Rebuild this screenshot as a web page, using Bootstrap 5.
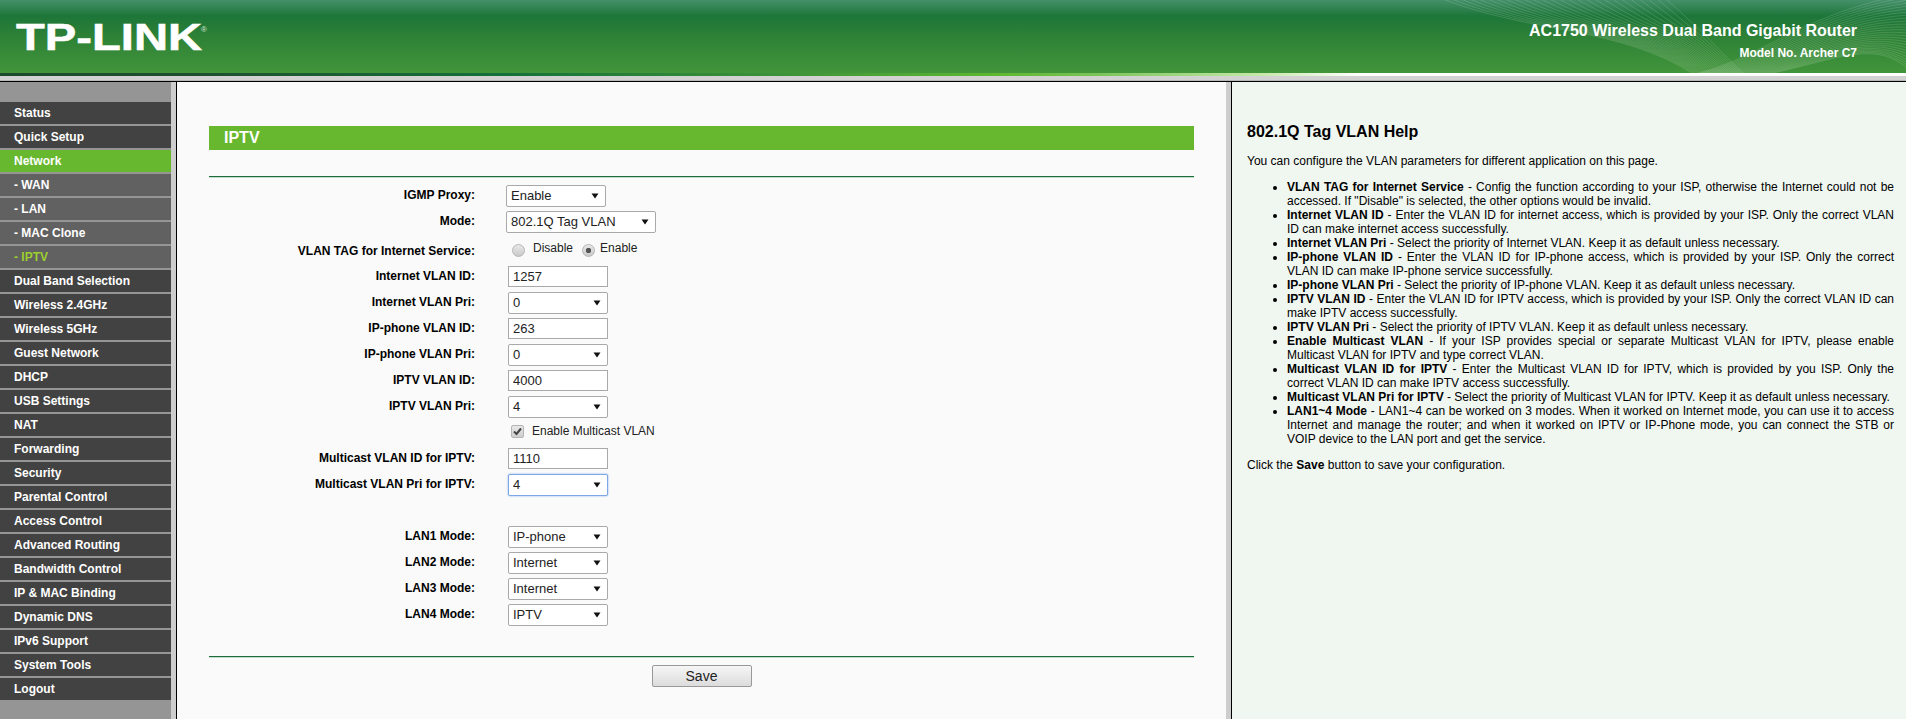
<!DOCTYPE html>
<html lang="en">
<head>
<meta charset="utf-8">
<title>IPTV</title>
<link href="https://cdn.jsdelivr.net/npm/bootstrap@5.3.0/dist/css/bootstrap.min.css" rel="stylesheet">
<style>
html,body{height:719px;overflow:hidden;background:#fafafa;}
body{font-family:"Liberation Sans",Arial,sans-serif;font-size:12px;color:#000;}
.hdr{height:73px;background:linear-gradient(180deg,#45906a 0,#1d7639 16px,#2d8136 36px,#42953a 73px);position:relative;overflow:hidden;}
.hdr svg.waves{position:absolute;inset:0;}
.logo-txt{position:absolute;left:16px;top:19px;font-weight:700;font-size:37px;line-height:38px;color:#fff;transform:scaleX(1.275);transform-origin:left center;-webkit-text-stroke:.5px #fff;}
.logo-reg{position:absolute;left:201px;top:25px;font-size:8px;line-height:10px;color:#d8e8d8;}
.hdr-r{position:absolute;right:49px;top:20px;text-align:right;color:#fff;font-weight:700;}
.hdr-t{font-size:16px;line-height:22px;}
.hdr-m{font-size:12px;line-height:16px;margin-top:3px;}
.hdr-band{height:3px;background:linear-gradient(90deg,#1d4a2c 0,#1f4f2f 200px,#14703a 500px,#3f9538 800px,#5fb830 1000px,#7cc45a 1100px,#c5e8a8 1260px,#fff 1360px,#fff 100%);}
.hdr-gray{height:5px;background:linear-gradient(180deg,#d2d2d2 0,#d2d2d2 70%,#aaa 100%);}
.shell{height:638px;border-top:1px solid #000;}
.side{width:177px;flex:none;background:#959595;border-right:1px solid #000;box-shadow:inset -5px 0 0 #cdcdcd;padding:20px 5px 0 0;}
.side-list{gap:2px;}
.side-i{display:block;height:22px;line-height:22px;padding-left:14px;background:#424242;color:#fff;font-weight:700;font-size:12px;text-decoration:none;}
.side-i.sub{background:#616161;}
.side-i.act{background:#67b82f;}
.side-i.cur{color:#9ccf2e;}
.mainp{width:1055px;flex:none;background:#fafafa;border-right:1px solid #000;box-shadow:inset -5px 0 0 #cdcdcd;padding:44px 37px 0 32px;}
.ttl{height:24px;line-height:23px;background:#67b82f;color:#fff;font-weight:700;font-size:16px;padding-left:15px;}
.rule{height:2px;border-top:1px solid #1c6b3c;background:#fff;box-shadow:inset 0 1px 0 #c3dcc8;}
.rule-a{margin-top:26px;}
.rule-b{margin-top:26px;}
.frm{padding-top:7px;}
.frow{height:26px;}
.frow.tall{height:29px;}
.frow.gap{height:52px;}
.lab{width:266px;flex:none;text-align:right;font-weight:700;line-height:21px;}
.ctl{padding-left:33px;}
.ctl.nar{padding-left:31px;}
select.pick{appearance:none;-webkit-appearance:none;--bs-form-select-bg-img:none;background-image:url("data:image/svg+xml,%3Csvg xmlns='http://www.w3.org/2000/svg' width='8' height='6'%3E%3Cpath d='M0.5 0.5H7.5L4 5.5Z' fill='%23111'/%3E%3C/svg%3E");background-repeat:no-repeat;background-position:right 6px center;background-size:8px 6px;width:100px;height:22px;padding:0 16px 0 4px;font-size:13px;line-height:20px;border:1px solid #a9a9a9;border-radius:2px;background-color:#fff;color:#222;box-shadow:none;font-family:"Liberation Sans",Arial,sans-serif;}
select.pick.w1{width:150px;}
select.pick.foc{border-color:#7da7e6;box-shadow:0 0 2px #7da7e6;}
input.txt{width:100px;height:21px;padding:0 4px;font-size:13px;line-height:19px;border:1px solid #a9a9a9;border-radius:0;background:#fff;color:#222;font-family:"Liberation Sans",Arial,sans-serif;}
.rad{appearance:none;width:13px;height:13px;border-radius:50%;border:1px solid #b5b5b5;background:linear-gradient(180deg,#e8e8e8,#c9c9c9);display:block;flex:none;margin:0;}
.rad:checked{background:radial-gradient(circle,#555 0,#555 2.4px,transparent 3px),linear-gradient(180deg,#e8e8e8,#c9c9c9);}
.rad-row{height:24px;padding-left:37px;padding-top:4px;}
.rad-row .rad{margin-top:3px;}
.rad-row .optl-a{margin:0 9px 0 8px;}
.rad-row .optl-b{margin-left:5px;}
.chk-row{padding-left:36px;padding-top:2px;}
.chk{appearance:none;width:13px;height:13px;border-radius:2px;border:1px solid #b5b5b5;background:linear-gradient(180deg,#e8e8e8,#cfcfcf);display:block;flex:none;margin:0;}
.optl{font-size:12px;line-height:14px;color:#222;}
.chkm{position:absolute;left:1px;top:1px;}
.foot{padding-top:7px;}
.savebtn{width:100px;height:22px;padding:0;font-size:14px;line-height:20px;color:#222;background:linear-gradient(180deg,#f6f6f6,#dcdcdc);border:1px solid #999;border-radius:2px;--bs-btn-hover-bg:#eee;}
.helpp{flex:1 1 auto;background:#f0f6f0;padding:41px 12px 0 15px;}
.helpp h1{font-size:16px;font-weight:700;line-height:18px;margin:0 0 13px;}
.helpp p{font-size:12px;line-height:14px;margin:0;}
.helpp ul{margin:12px 0 12px;padding-left:40px;}
.helpp li{font-size:12px;line-height:14px;text-align:justify;}
</style>
</head>
<body>
<header>
  <div class="hdr">
    <svg class="waves" width="1906" height="73" id="wv"></svg>
    <div class="logo-txt">TP-LINK</div>
    <div class="logo-reg">®</div>
    <div class="hdr-r">
      <div class="hdr-t">AC1750 Wireless Dual Band Gigabit Router</div>
      <div class="hdr-m">Model No. Archer C7</div>
    </div>
  </div>
  <div class="hdr-band"></div>
  <div class="hdr-gray"></div>
</header>
<div class="shell d-flex">
  <nav class="side">
    <div class="side-list d-flex flex-column">
      <a class="side-i" href="#">Status</a>
      <a class="side-i" href="#">Quick Setup</a>
      <a class="side-i act" href="#">Network</a>
      <a class="side-i sub" href="#">- WAN</a>
      <a class="side-i sub" href="#">- LAN</a>
      <a class="side-i sub" href="#">- MAC Clone</a>
      <a class="side-i sub cur" href="#">- IPTV</a>
      <a class="side-i" href="#">Dual Band Selection</a>
      <a class="side-i" href="#">Wireless 2.4GHz</a>
      <a class="side-i" href="#">Wireless 5GHz</a>
      <a class="side-i" href="#">Guest Network</a>
      <a class="side-i" href="#">DHCP</a>
      <a class="side-i" href="#">USB Settings</a>
      <a class="side-i" href="#">NAT</a>
      <a class="side-i" href="#">Forwarding</a>
      <a class="side-i" href="#">Security</a>
      <a class="side-i" href="#">Parental Control</a>
      <a class="side-i" href="#">Access Control</a>
      <a class="side-i" href="#">Advanced Routing</a>
      <a class="side-i" href="#">Bandwidth Control</a>
      <a class="side-i" href="#">IP &amp; MAC Binding</a>
      <a class="side-i" href="#">Dynamic DNS</a>
      <a class="side-i" href="#">IPv6 Support</a>
      <a class="side-i" href="#">System Tools</a>
      <a class="side-i" href="#">Logout</a>
    </div>
  </nav>
  <main class="mainp">
    <div class="ttl">IPTV</div>
    <div class="rule rule-a"></div>
    <form class="frm">
      <div class="frow d-flex"><div class="lab">IGMP Proxy:</div><div class="ctl nar"><select class="form-select pick"><option>Enable</option></select></div></div>
      <div class="frow d-flex"><div class="lab">Mode:</div><div class="ctl nar"><select class="form-select pick w1"><option>802.1Q Tag VLAN</option></select></div></div>
      <div class="frow tall d-flex"><div class="lab pt-1">VLAN TAG for Internet Service:</div>
        <div class="rad-row d-flex align-items-start">
          <input class="rad" type="radio" name="vt">
          <span class="optl optl-a">Disable</span>
          <input class="rad" type="radio" name="vt" checked>
          <span class="optl optl-b">Enable</span>
        </div>
      </div>
      <div class="frow d-flex"><div class="lab">Internet VLAN ID:</div><div class="ctl"><input class="form-control txt" value="1257"></div></div>
      <div class="frow d-flex"><div class="lab">Internet VLAN Pri:</div><div class="ctl"><select class="form-select pick"><option>0</option></select></div></div>
      <div class="frow d-flex"><div class="lab">IP-phone VLAN ID:</div><div class="ctl"><input class="form-control txt" value="263"></div></div>
      <div class="frow d-flex"><div class="lab">IP-phone VLAN Pri:</div><div class="ctl"><select class="form-select pick"><option>0</option></select></div></div>
      <div class="frow d-flex"><div class="lab">IPTV VLAN ID:</div><div class="ctl"><input class="form-control txt" value="4000"></div></div>
      <div class="frow d-flex"><div class="lab">IPTV VLAN Pri:</div><div class="ctl"><select class="form-select pick"><option>4</option></select></div></div>
      <div class="frow d-flex"><div class="lab"></div><div class="chk-row d-flex align-items-center gap-2 align-self-start">
        <span class="position-relative d-block"><input class="chk" type="checkbox" checked><svg class="chkm" width="11" height="11" viewBox="0 0 11 11"><path d="M2 5.5 L4.5 8 L9 2.5" fill="none" stroke="#444" stroke-width="2"/></svg></span>
        <span class="optl">Enable Multicast VLAN</span></div></div>
      <div class="frow d-flex"><div class="lab">Multicast VLAN ID for IPTV:</div><div class="ctl"><input class="form-control txt" value="1110"></div></div>
      <div class="frow gap d-flex"><div class="lab">Multicast VLAN Pri for IPTV:</div><div class="ctl"><select class="form-select pick foc"><option>4</option></select></div></div>
      <div class="frow d-flex"><div class="lab">LAN1 Mode:</div><div class="ctl"><select class="form-select pick"><option>IP-phone</option></select></div></div>
      <div class="frow d-flex"><div class="lab">LAN2 Mode:</div><div class="ctl"><select class="form-select pick"><option>Internet</option></select></div></div>
      <div class="frow d-flex"><div class="lab">LAN3 Mode:</div><div class="ctl"><select class="form-select pick"><option>Internet</option></select></div></div>
      <div class="frow d-flex"><div class="lab">LAN4 Mode:</div><div class="ctl"><select class="form-select pick"><option>IPTV</option></select></div></div>
    </form>
    <div class="rule rule-b"></div>
    <div class="foot text-center"><button type="button" class="btn savebtn">Save</button></div>
  </main>
  <aside class="helpp">
    <h1>802.1Q Tag VLAN Help</h1>
    <p>You can configure the VLAN parameters for different application on this page.</p>
    <ul>
      <li><b>VLAN TAG for Internet Service</b> - Config the function according to your ISP, otherwise the Internet could not be accessed. If "Disable" is selected, the other options would be invalid.</li>
      <li><b>Internet VLAN ID</b> - Enter the VLAN ID for internet access, which is provided by your ISP. Only the correct VLAN ID can make internet access successfully.</li>
      <li><b>Internet VLAN Pri</b> - Select the priority of Internet VLAN. Keep it as default unless necessary.</li>
      <li><b>IP-phone VLAN ID</b> - Enter the VLAN ID for IP-phone access, which is provided by your ISP. Only the correct VLAN ID can make IP-phone service successfully.</li>
      <li><b>IP-phone VLAN Pri</b> - Select the priority of IP-phone VLAN. Keep it as default unless necessary.</li>
      <li><b>IPTV VLAN ID</b> - Enter the VLAN ID for IPTV access, which is provided by your ISP. Only the correct VLAN ID can make IPTV access successfully.</li>
      <li><b>IPTV VLAN Pri</b> - Select the priority of IPTV VLAN. Keep it as default unless necessary.</li>
      <li><b>Enable Multicast VLAN</b> - If your ISP provides special or separate Multicast VLAN for IPTV, please enable Multicast VLAN for IPTV and type correct VLAN.</li>
      <li><b>Multicast VLAN ID for IPTV</b> - Enter the Multicast VLAN ID for IPTV, which is provided by you ISP. Only the correct VLAN ID can make IPTV access successfully.</li>
      <li><b>Multicast VLAN Pri for IPTV</b> - Select the priority of Multicast VLAN for IPTV. Keep it as default unless necessary.</li>
      <li><b>LAN1~4 Mode</b> - LAN1~4 can be worked on 3 modes. When it worked on Internet mode, you can use it to access Internet and manage the router; and when it worked on IPTV or IP-Phone mode, you can connect the STB or VOIP device to the LAN port and get the service.</li>
    </ul>
    <p>Click the <b>Save</b> button to save your configuration.</p>
  </aside>
</div>
<script>
(function(){var s='';
for(var i=0;i<26;i++){
 s+='<path d="M'+(1440+i*9)+',-2 C'+(1530+i*7)+',34 '+(1620+i*3)+',26 '+(1695+i*2)+',75" fill="none" stroke="#fff" stroke-opacity=".14"/>';
 s+='<path d="M'+(1690+i*3)+',75 C'+(1760+i*3)+',60 '+(1800+i*3)+','+(14+i)+' 1908,'+(-6+i*3)+'" fill="none" stroke="#fff" stroke-opacity=".14"/>';
}
document.getElementById('wv').innerHTML=s;})();
</script>
<script src="https://cdn.jsdelivr.net/npm/bootstrap@5.3.0/dist/js/bootstrap.bundle.min.js"></script>
</body>
</html>
